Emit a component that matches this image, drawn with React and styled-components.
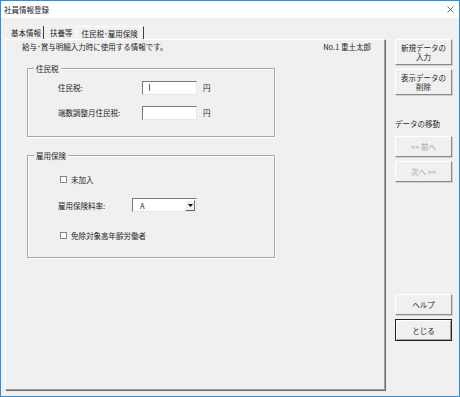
import styled, { createGlobalStyle } from "styled-components";

const GlobalStyle = createGlobalStyle`
  html, body {
    margin: 0;
    padding: 0;
    background: #ffffff;
  }
  body {
    font-family: "Noto Sans CJK JP", "Noto Sans", sans-serif;
  }
`;

const Window = styled.div`
  width: 460px;
  height: 397px;
  box-sizing: border-box;
  border: 1px solid #2f8fdc;
  background: #f0f0f0;
  display: flex;
  flex-direction: column;
  font-size: 7.5px;
  color: #1e1e1e;
`;

const TitleBar = styled.div`
  height: 17px;
  background: #ffffff;
  display: flex;
  align-items: center;
  justify-content: space-between;
  padding: 0 5px 0 3px;
  line-height: 10px;
`;

const Body = styled.div`
  flex: 1;
  display: flex;
  gap: 10px;
  padding-left: 4px;
`;

const LeftCol = styled.div`
  width: 380px;
  padding-top: 8px;
  display: flex;
  flex-direction: column;
`;

const TabStrip = styled.div`
  height: 13px;
  display: flex;
  line-height: 13px;
`;

const Tab = styled.div`
  box-sizing: border-box;
  height: 13px;
  padding: ${(p) => (p.$active ? "0 5px 0 5px" : "0 2px 0 6px")};
  border-right: 1px solid ${(p) => (p.$sep || p.$active ? "#3c3c3c" : "transparent")};
  border-left: ${(p) => (p.$active ? "1px solid #ffffff" : "none")};
  border-top: ${(p) => (p.$active ? "1px solid #ffffff" : "none")};
  line-height: ${(p) => (p.$active ? "13px" : "14px")};
`;

const Panel = styled.div`
  box-sizing: border-box;
  height: 351px;
  border-style: solid;
  border-width: 1px;
  border-color: #ffffff #a0a0a0 #a0a0a0 #ffffff;
  box-shadow: 1px 1px 0 #696969;
  padding: 1px 13px 0 0;
  display: flex;
  flex-direction: column;
`;

const DescRow = styled.div`
  height: 12px;
  line-height: 12px;
  display: flex;
  justify-content: space-between;
  padding-left: 16px;
`;

const Frame = styled.div`
  position: relative;
  box-sizing: border-box;
  width: 248px;
  height: ${(p) => p.$h}px;
  margin: ${(p) => p.$mt}px 0 0 21px;
  border: 1px solid #a8a8a8;
  box-shadow: inset 1px 1px 0 #ffffff, 1px 1px 0 #ffffff;
  padding-top: ${(p) => p.$pt}px;
  display: flex;
  flex-direction: column;
`;

const Legend = styled.span`
  position: absolute;
  top: -6px;
  left: 6px;
  padding: 0 2px;
  background: #f0f0f0;
  line-height: 11px;
`;

const FieldRow = styled.div`
  height: ${(p) => p.$h}px;
  margin-top: ${(p) => p.$mt || 0}px;
  display: flex;
  align-items: center;
  padding-left: ${(p) => p.$pl}px;
`;

const FieldLabel = styled.span`
  width: ${(p) => p.$w}px;
  flex-shrink: 0;
`;

const TextBox = styled.div`
  box-sizing: border-box;
  width: 55px;
  height: 14px;
  background: #ffffff;
  border-style: solid;
  border-width: 1px;
  border-color: #7a7a7a #e6e6e6 #e6e6e6 #7a7a7a;
  display: flex;
  align-items: center;
  padding-left: 6px;
`;

const Caret = styled.span`
  width: 1px;
  height: 7px;
  background: #606060;
`;

const Unit = styled.span`
  margin-left: 6px;
`;

const CheckBox = styled.span`
  box-sizing: border-box;
  width: 7px;
  height: 7px;
  background: #ffffff;
  border: 1px solid #888888;
  margin-right: 4px;
`;

const Combo = styled.div`
  box-sizing: border-box;
  width: 65px;
  height: 14px;
  background: #ffffff;
  border-style: solid;
  border-width: 1px;
  border-color: #7a7a7a #e6e6e6 #e6e6e6 #7a7a7a;
  display: flex;
  align-items: center;
  justify-content: space-between;
  padding: 0 1px 0 7px;
`;

const ComboArrow = styled.span`
  box-sizing: border-box;
  width: 10px;
  height: 11px;
  background: #f0f0f0;
  border-style: solid;
  border-width: 1px;
  border-color: #ffffff #696969 #696969 #ffffff;
  display: flex;
  align-items: center;
  justify-content: center;
`;

const RightCol = styled.div`
  width: 57px;
  padding-top: 21px;
  display: flex;
  flex-direction: column;
`;

const Button = styled.div`
  box-sizing: border-box;
  height: ${(p) => p.$h}px;
  margin-top: ${(p) => p.$mt || 0}px;
  background: #f0f0f0;
  border-style: solid;
  border-width: 1px;
  border-color: ${(p) =>
    p.$default ? "#202020" : "#ffffff #8a8a8a #8a8a8a #ffffff"};
  box-shadow: ${(p) =>
    p.$default
      ? "inset 1px 1px 0 #ffffff, inset -1px -1px 0 #a0a0a0"
      : "1px 1px 0 #d0d0d0"};
  color: ${(p) => (p.$disabled ? "#a6a6a6" : "#1e1e1e")};
  display: flex;
  align-items: center;
  justify-content: center;
  text-align: center;
  line-height: 9px;
  white-space: pre-line;
`;

const SideLabel = styled.div`
  height: 10px;
  line-height: 10px;
  margin-top: 24px;
`;

function CloseIcon() {
  return (
    <svg width="7" height="7" viewBox="0 0 7 7">
      <path d="M0.5 0.5 L6.5 6.5 M6.5 0.5 L0.5 6.5" stroke="#444" strokeWidth="0.8" />
    </svg>
  );
}

function DownArrow() {
  return (
    <svg width="5" height="3" viewBox="0 0 5 3">
      <path d="M0 0 H5 L2.5 3 Z" fill="#000" />
    </svg>
  );
}

export default function App() {
  return (
    <>
      <GlobalStyle />
      <Window>
        <TitleBar>
          <span>社員情報登録</span>
          <CloseIcon />
        </TitleBar>
        <Body>
          <LeftCol>
            <TabStrip>
              <Tab $sep>基本情報</Tab>
              <Tab>扶養等</Tab>
              <Tab $active>住民税･雇用保険</Tab>
            </TabStrip>
            <Panel>
              <DescRow>
                <span>給与･賞与明細入力時に使用する情報です。</span>
                <span>No.1 重土太郎</span>
              </DescRow>

              <Frame $h={69} $mt={15} $pt={6}>
                <Legend>住民税</Legend>
                <FieldRow $h={25} $pl={30}>
                  <FieldLabel $w={84}>住民税:</FieldLabel>
                  <TextBox>
                    <Caret />
                  </TextBox>
                  <Unit>円</Unit>
                </FieldRow>
                <FieldRow $h={25} $pl={30}>
                  <FieldLabel $w={84}>端数調整月住民税:</FieldLabel>
                  <TextBox />
                  <Unit>円</Unit>
                </FieldRow>
              </Frame>

              <Frame $h={103} $mt={18} $pt={16}>
                <Legend>雇用保険</Legend>
                <FieldRow $h={14} $pl={32}>
                  <CheckBox />
                  <span>未加入</span>
                </FieldRow>
                <FieldRow $h={14} $mt={12} $pl={30}>
                  <FieldLabel $w={74}>雇用保険料率:</FieldLabel>
                  <Combo>
                    <span>A</span>
                    <ComboArrow>
                      <DownArrow />
                    </ComboArrow>
                  </Combo>
                </FieldRow>
                <FieldRow $h={14} $mt={16} $pl={32}>
                  <CheckBox />
                  <span>免除対象高年齢労働者</span>
                </FieldRow>
              </Frame>
            </Panel>
          </LeftCol>

          <RightCol>
            <Button $h={26}>{"新規データの\n入力"}</Button>
            <Button $h={26} $mt={4}>{"表示データの\n削除"}</Button>
            <SideLabel>データの移動</SideLabel>
            <Button $h={21} $mt={7} $disabled>{"<< 前へ"}</Button>
            <Button $h={21} $mt={4} $disabled>{"次へ >>"}</Button>
            <Button $h={21} $mt={112}>ヘルプ</Button>
            <Button $h={22} $mt={4} $default>とじる</Button>
          </RightCol>
        </Body>
      </Window>
    </>
  );
}
